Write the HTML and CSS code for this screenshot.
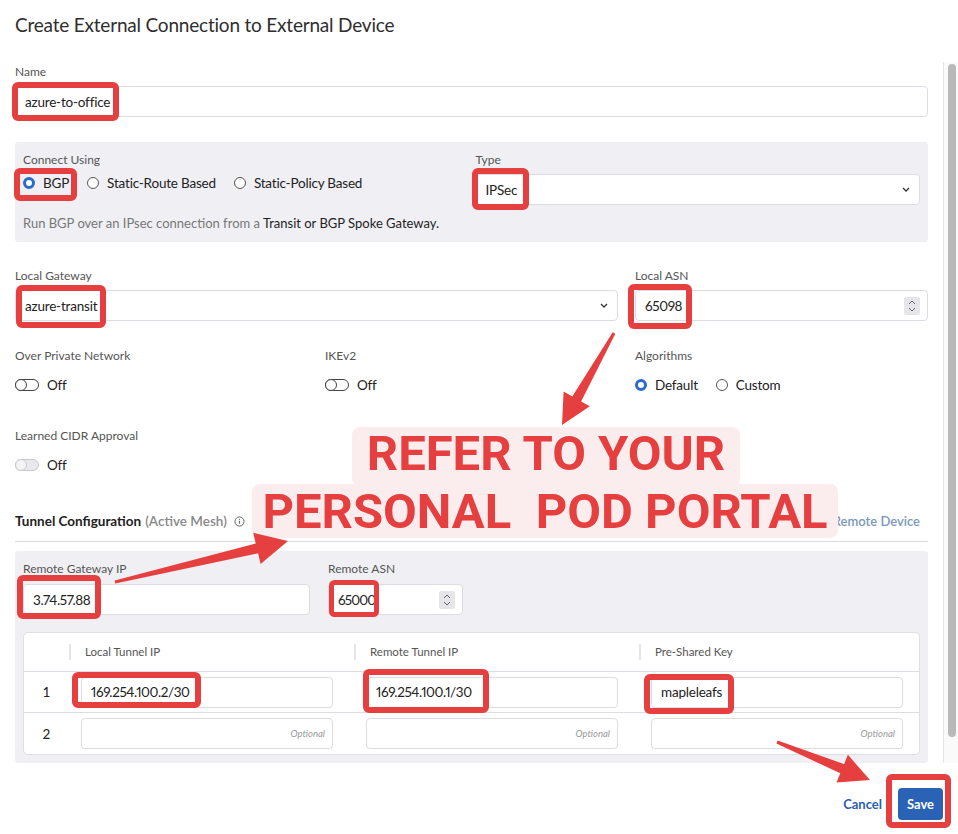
FILE: index.html
```html
<!DOCTYPE html>
<html>
<head>
<meta charset="utf-8">
<title>Create External Connection</title>
<link rel="stylesheet" href="styles.css">
</head>
<body>
<div class="page">
  <main class="content">
    <h1 class="title">Create External Connection to External Device</h1>

    <div class="field name-field">
      <div class="label">Name</div>
      <div class="input">azure-to-office</div>
    </div>

    <section class="panel connect">
      <div class="connect-grid">
        <div>
          <div class="label">Connect Using</div>
          <div class="radios">
            <span class="opt"><span class="radio on"></span>BGP</span>
            <span class="opt"><span class="radio"></span>Static-Route Based</span>
            <span class="opt"><span class="radio"></span>Static-Policy Based</span>
          </div>
        </div>
        <div>
          <div class="label">Type</div>
          <div class="input select">
            <span>IPSec</span>
            <svg class="chev" width="8" height="5" viewBox="0 0 8 5"><path d="M1 1l3 3 3-3" fill="none" stroke="#333" stroke-width="1.3"/></svg>
          </div>
        </div>
      </div>
      <p class="help">Run BGP over an IPsec connection from a <span class="dark">Transit or BGP Spoke Gateway.</span></p>
    </section>

    <div class="grid3 gw-row">
      <div class="span2">
        <div class="label">Local Gateway</div>
        <div class="input select">
          <span>azure-transit</span>
          <svg class="chev" width="8" height="5" viewBox="0 0 8 5"><path d="M1 1l3 3 3-3" fill="none" stroke="#333" stroke-width="1.3"/></svg>
        </div>
      </div>
      <div>
        <div class="label">Local ASN</div>
        <div class="input select">
          <span class="digits">65098</span>
          <span class="spin"><svg width="10" height="14" viewBox="0 0 10 14"><path d="M2 5l3-3 3 3M2 9l3 3 3-3" fill="none" stroke="#666" stroke-width="1"/></svg></span>
        </div>
      </div>
    </div>

    <div class="grid3 toggles-row">
      <div>
        <div class="label">Over Private Network</div>
        <div class="toggle-line"><span class="toggle"></span>Off</div>
      </div>
      <div>
        <div class="label">IKEv2</div>
        <div class="toggle-line"><span class="toggle"></span>Off</div>
      </div>
      <div>
        <div class="label">Algorithms</div>
        <div class="toggle-line algo">
          <span class="opt"><span class="radio on"></span>Default</span>
          <span class="opt"><span class="radio"></span>Custom</span>
        </div>
      </div>
    </div>

    <div class="cidr-row">
      <div class="label">Learned CIDR Approval</div>
      <div class="toggle-line"><span class="toggle disabled"></span>Off</div>
    </div>

    <div class="tunnel-head">
      <div class="th-title">Tunnel Configuration <span class="muted">(Active Mesh)</span>
        <svg class="info" width="11" height="11" viewBox="0 0 11 11"><circle cx="5.5" cy="5.5" r="4.6" fill="none" stroke="#666" stroke-width="1"/><path d="M5.5 4.8v3" stroke="#666" stroke-width="1.1"/><circle cx="5.5" cy="3.3" r="0.65" fill="#666"/></svg>
      </div>
      <div class="add-link">Add Remote Device</div>
    </div>

    <section class="panel tunnel">
      <div class="tunnel-top">
        <div class="tg-ip">
          <div class="label">Remote Gateway IP</div>
          <div class="input"><span class="digits">3.74.57.88</span></div>
        </div>
        <div class="tg-asn">
          <div class="label">Remote ASN</div>
          <div class="input select">
            <span class="digits tight">65000</span>
            <span class="spin"><svg width="10" height="14" viewBox="0 0 10 14"><path d="M2 5l3-3 3 3M2 9l3 3 3-3" fill="none" stroke="#666" stroke-width="1"/></svg></span>
          </div>
        </div>
      </div>

      <div class="table">
        <div class="trow thead">
          <div></div>
          <div class="th">Local Tunnel IP</div>
          <div class="th">Remote Tunnel IP</div>
          <div class="th">Pre-Shared Key</div>
        </div>
        <div class="trow">
          <div class="num">1</div>
          <div class="td"><div class="input"><span class="digits">169.254.100.2/30</span></div></div>
          <div class="td"><div class="input"><span class="digits">169.254.100.1/30</span></div></div>
          <div class="td"><div class="input">mapleleafs</div></div>
        </div>
        <div class="trow last">
          <div class="num">2</div>
          <div class="td"><div class="input opt-in">Optional</div></div>
          <div class="td"><div class="input opt-in">Optional</div></div>
          <div class="td"><div class="input opt-in">Optional</div></div>
        </div>
      </div>
    </section>

    <div class="actions">
      <span class="cancel">Cancel</span>
      <span class="save">Save</span>
    </div>
  </main>

  <div class="scroll"><div class="thumb"></div></div>

  <div class="note note1">REFER TO YOUR</div>
  <div class="note note2">PERSONAL&nbsp; POD PORTAL</div>

  <svg class="marks" width="958" height="834" viewBox="0 0 958 834">
    <g fill="none" stroke="#e5403f" stroke-width="6" stroke-linejoin="round">
      <rect x="15" y="85" width="101" height="33" rx="3"/>
      <rect x="17" y="171" width="57" height="27" rx="3"/>
      <rect x="475" y="171" width="51" height="36" rx="3"/>
      <rect x="19" y="288" width="84" height="37" rx="3"/>
      <rect x="631" y="287" width="58" height="39" rx="3"/>
      <rect x="20" y="578" width="78" height="38" rx="3"/>
      <rect x="75" y="675" width="123" height="30" rx="3"/>
      <rect x="366" y="672" width="120" height="38" rx="3"/>
      <rect x="647" y="677" width="84" height="34" rx="3"/>
      <rect x="889" y="777" width="59" height="48" rx="3"/>
    </g>
    <rect x="331.5" y="582.5" width="45" height="32" rx="3" fill="none" stroke="#e5403f" stroke-width="5"/>
    <g fill="#e5403f">
      <polygon points="615.3,333.7 581.1,401.4 589.8,406.3 562,425 563.6,391.5 572.3,396.4 612.7,332.3"/>
      <polygon points="115.3,583.5 258.1,553.3 260.6,564 288,541 253.2,532.8 255.7,543.5 114.7,580.5"/>
      <polygon points="776.4,743.4 840.3,773.3 836.5,782.6 870,780 847.9,754.8 844.1,764.1 777.6,740.6"/>
    </g>
  </svg>
</div>
</body>
</html>
```

FILE: styles.css
```css
* { box-sizing: border-box; }

body {
  margin: 0;
  background: #fff;
  font-family: Lato, "Noto Sans", sans-serif;
  color: #2b2b2b;
}

.page {
  position: relative;
  width: 958px;
  height: 834px;
  overflow: hidden;
  display: flex;
  align-items: flex-start;
}

.content {
  width: 943px;
  padding: 0 15px;
}

.title {
  margin: 0;
  padding-top: 13px;
  font-size: 19px;
  line-height: 24px;
  font-weight: 400;
  letter-spacing: -0.2px;
  color: #2e2e2e;
}

.label {
  font-size: 12px;
  line-height: 16px;
  color: #555;
}

.input {
  height: 31px;
  margin-top: 6px;
  border: 1px solid #dcdce3;
  border-radius: 4px;
  background: #fff;
  display: flex;
  align-items: center;
  justify-content: space-between;
  padding: 0 9px;
  font-size: 13.5px;
  letter-spacing: -0.2px;
  color: #222;
}

.digits {
  letter-spacing: -0.4px;
  font-variant-numeric: proportional-nums;
}

.digits.tight { letter-spacing: -0.9px; }

.name-field { margin-top: 27px; }

.panel {
  background: #f0f0f4;
  border-radius: 3px;
}

.connect {
  margin-top: 25px;
  padding: 10px 8px 10px 8px;
}

.connect-grid {
  display: grid;
  grid-template-columns: 1fr 1fr;
  gap: 8px;
}

.radios {
  display: flex;
  align-items: center;
  gap: 18px;
  margin-top: 7px;
  height: 16px;
  font-size: 13.5px;
  letter-spacing: -0.2px;
  color: #222;
}

.opt {
  display: flex;
  align-items: center;
  gap: 8px;
}

.radio {
  width: 12px;
  height: 12px;
  border-radius: 50%;
  border: 1px solid #555;
  background: #fff;
}

.radio.on { border: 3px solid #2a6bcc; }

.chev { flex: none; }

.spin {
  width: 16px;
  height: 18px;
  background: #e6e6ea;
  border-radius: 2px;
  display: flex;
  align-items: center;
  justify-content: center;
  margin-right: -2px;
}

.help {
  margin: 9px 0 0;
  font-size: 13px;
  line-height: 18px;
  color: #777;
}

.help .dark { color: #222; }

.grid3 {
  display: grid;
  grid-template-columns: 293px 293px 293px;
  column-gap: 17px;
}

.span2 { grid-column: span 2; }

.gw-row { margin-top: 26px; }
.toggles-row { margin-top: 27px; }

.toggle-line {
  display: flex;
  align-items: center;
  gap: 8px;
  margin-top: 12px;
  height: 18px;
  font-size: 13.5px;
  letter-spacing: -0.2px;
  color: #222;
}

.toggle-line.algo { gap: 18px; }

.toggle {
  width: 24px;
  height: 12px;
  border: 1.3px solid #444;
  border-radius: 6px;
  display: flex;
  align-items: center;
}

.toggle::before {
  content: "";
  width: 12px;
  height: 12px;
  margin-left: -1.3px;
  border: 1.3px solid #444;
  border-radius: 50%;
  box-sizing: border-box;
  background: #fff;
}

.toggle.disabled {
  border-color: #c9c9cf;
  background: #e9e9ed;
}

.toggle.disabled::before {
  border-color: #c9c9cf;
  background: #f4f4f6;
}

.cidr-row { margin-top: 34px; }

.tunnel-head {
  margin-top: 38px;
  height: 30px;
  padding-bottom: 11px;
  border-bottom: 1px solid #dcdce2;
  display: flex;
  justify-content: space-between;
  align-items: center;
}

.th-title {
  font-size: 13.5px;
  font-weight: 700;
  color: #222;
  display: flex;
  align-items: center;
  gap: 4px;
}

.th-title .muted {
  color: #888;
  font-weight: 600;
}

.info { margin-left: 3px; }

.add-link {
  margin-right: 8px;
  font-size: 13px;
  font-weight: 600;
  color: #7b98bb;
}

.tunnel {
  margin-top: 9px;
  padding: 10px 8px 8px 8px;
}

.tunnel-top {
  display: flex;
  gap: 18px;
}

.tg-ip { width: 287px; }
.tg-asn { width: 135px; }

.tg-ip .input, .tg-asn .input { margin-top: 7px; }

.table {
  margin-top: 17px;
  background: #fff;
  border: 1px solid #dedee4;
  border-radius: 5px;
}

.trow {
  display: grid;
  grid-template-columns: 45px 285px 285px 1fr;
  align-items: center;
  height: 41px;
  border-bottom: 1px solid #dcdce2;
}

.trow.thead { height: 39px; }
.trow.last { border-bottom: none; height: 41px; }

.th {
  height: 16px;
  line-height: 16px;
  border-left: 2px solid #e4e4e9;
  padding-left: 14px;
  font-size: 11.5px;
  color: #555;
}

.num {
  text-align: center;
  font-size: 13.5px;
  color: #222;
}

.td { padding-left: 12px; }

.td .input {
  width: 252px;
  margin-top: 0;
}

.opt-in {
  justify-content: flex-end;
  font-style: italic;
  font-size: 9.5px;
  letter-spacing: 0;
  color: #999;
  padding-right: 7px;
}

.actions {
  margin-top: 25px;
  margin-right: -15px;
  display: flex;
  justify-content: flex-end;
  align-items: center;
  gap: 16px;
}

.cancel {
  font-size: 13px;
  font-weight: 700;
  color: #2b5fae;
}

.save {
  width: 45px;
  height: 32px;
  border-radius: 4px;
  background: #2a62b6;
  color: #fff;
  font-size: 13px;
  font-weight: 700;
  display: flex;
  align-items: center;
  justify-content: center;
}

.scroll {
  flex: none;
  width: 15px;
  height: 701px;
  margin-top: 62px;
  border-left: 1px solid #e4e4e4;
  background: #fafafa;
  padding: 2px 0 0 4px;
}

.thumb {
  width: 8px;
  height: 673px;
  background: #b9b9b9;
  border-radius: 4px;
}

.note {
  position: absolute;
  background: #fbeded;
  border-radius: 8px;
  color: #e5403f;
  font-family: Roboto, "Liberation Sans", sans-serif;
  font-weight: 700;
  font-size: 49px;
  line-height: 54px;
  text-align: center;
  white-space: nowrap;
}

.note1 {
  left: 352px;
  top: 427px;
  width: 388px;
  height: 60px;
  padding-top: 0;
}

.note2 {
  left: 252px;
  top: 484px;
  width: 586px;
  height: 54px;
  padding-top: 1px;
}

.marks {
  position: absolute;
  left: 0;
  top: 0;
  pointer-events: none;
}
```
